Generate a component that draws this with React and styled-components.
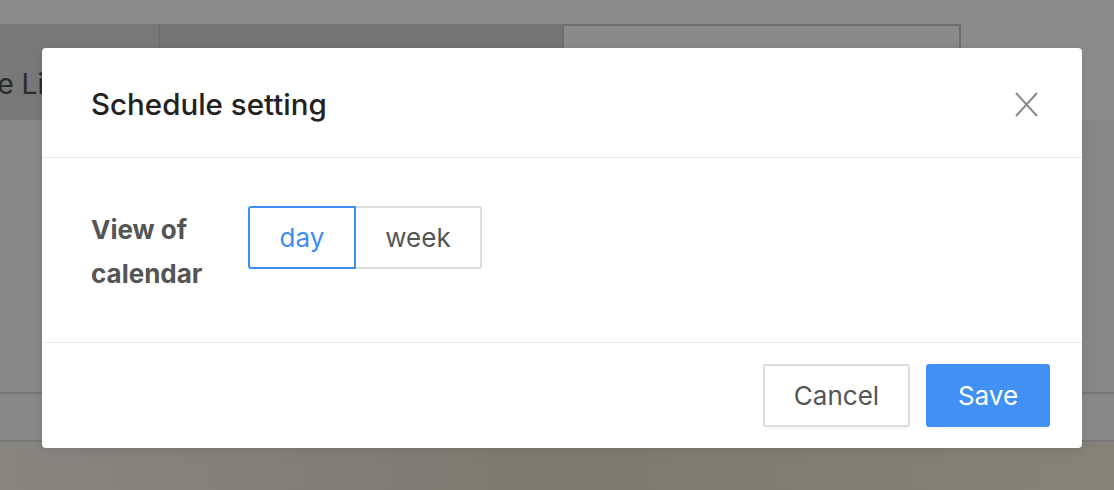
import styled, { createGlobalStyle } from "styled-components";

const GlobalStyle = createGlobalStyle`
  html, body {
    margin: 0;
    padding: 0;
    width: 1114px;
    height: 490px;
    overflow: hidden;
    font-family: Inter, "Liberation Sans", Arial, sans-serif;
  }
`;

const Page = styled.div`
  position: relative;
  width: 1114px;
  height: 490px;
  display: flex;
  flex-direction: column;
  background: #858178;
`;

const TopBand = styled.div`
  height: 24px;
  background: #8c8c8c;
`;

const TabRow = styled.div`
  height: 96px;
  display: flex;
  background: #8b8b8b;
`;

const Tab = styled.div`
  width: ${(p) => p.$width}px;
  background: ${(p) => p.$bg};
  border: ${(p) => (p.$outlined ? "2px solid #6f6f6f" : "none")};
  border-bottom: none;
  border-right: ${(p) => (p.$divider ? "2px solid #6e6e6e" : p.$outlined ? "2px solid #6f6f6f" : "none")};
  box-sizing: border-box;
  display: flex;
  align-items: center;
  font-size: 28px;
  color: #2b2b2b;
  overflow: hidden;
  white-space: nowrap;
  padding-top: 24px;
`;

const TabText = styled.span`
  margin-left: -52px;
`;

const Content = styled.div`
  height: 272px;
  background: #878787;
  border-bottom: 2px solid #777;
`;

const StripRow = styled.div`
  height: 46px;
  background: #888;
  border-bottom: 2px solid #777;
`;

const Floor = styled.div`
  flex: 1;
  background: linear-gradient(90deg, #878580, #7d7a71 50%, #858278);
`;

const Modal = styled.div`
  position: absolute;
  left: 42px;
  top: 48px;
  width: 1040px;
  height: 400px;
  background: #fff;
  border-radius: 4px;
  display: flex;
  flex-direction: column;
  box-shadow: 0 2px 12px rgba(0, 0, 0, 0.08);
`;

const Header = styled.div`
  height: 109px;
  border-bottom: 1px solid #ebebeb;
  display: flex;
  align-items: center;
  justify-content: space-between;
  padding: 0 44px 0 49px;
`;

const Title = styled.h2`
  margin: 0;
  font-size: 29.5px;
  font-weight: 500;
  color: #222;
  margin-top: 2px;
`;

const Close = styled.button`
  all: unset;
  width: 23px;
  height: 25px;
  display: flex;
  cursor: pointer;
  margin-top: 4px;
`;

const Body = styled.div`
  height: 185px;
  border-bottom: 1px solid #ebebeb;
  display: flex;
  align-items: flex-start;
  padding: 48px 0 0 49px;
  box-sizing: border-box;
`;

const Label = styled.div`
  width: 157px;
  font-size: 26px;
  font-weight: 700;
  line-height: 44px;
  color: #555;
  margin-top: 2px;
`;

const Segmented = styled.div`
  display: flex;
`;

const Segment = styled.button`
  all: unset;
  box-sizing: border-box;
  height: 63px;
  width: ${(p) => p.$width}px;
  text-align: center;
  font-size: 26px;
  line-height: 59px;
  color: ${(p) => (p.$active ? "#3d8ef0" : "#555")};
  border: 2px solid ${(p) => (p.$active ? "#3d8ef0" : "#dcdcdc")};
  border-left-width: ${(p) => (p.$active ? "2px" : "0")};
  border-radius: ${(p) => (p.$first ? "3px 0 0 3px" : "0 3px 3px 0")};
  cursor: pointer;
`;

const Footer = styled.div`
  flex: 1;
  display: flex;
  align-items: center;
  justify-content: flex-end;
  gap: 16px;
  padding: 0 32px 0 0;
`;

const Button = styled.button`
  all: unset;
  box-sizing: border-box;
  height: 63px;
  width: ${(p) => p.$width}px;
  text-align: center;
  font-size: 26px;
  line-height: 59px;
  border-radius: 3px;
  border: 2px solid ${(p) => (p.$primary ? "#4190f4" : "#dcdcdc")};
  background: ${(p) => (p.$primary ? "#4190f4" : "#fff")};
  color: ${(p) => (p.$primary ? "#fff" : "#555")};
  box-shadow: 0 2px 2px rgba(0, 0, 0, 0.04);
  cursor: pointer;
  margin-top: -1px;
`;

const App = () => {
  return (
    <>
      <GlobalStyle />
      <Page>
        <TopBand />
        <TabRow>
          <Tab $width={160} $bg="#777877" $divider>
            <TabText>Time Line</TabText>
          </Tab>
          <Tab $width={402} $bg="#737473" />
          <Tab $width={399} $bg="#8a8a8a" $outlined />
        </TabRow>
        <Content />
        <StripRow />
        <Floor />
        <Modal>
          <Header>
            <Title>Schedule setting</Title>
            <Close aria-label="close">
              <svg width="23" height="25" viewBox="0 0 23 25">
                <path
                  d="M1 1 L22 24 M22 1 L1 24"
                  stroke="#8a8a8a"
                  strokeWidth="2"
                  fill="none"
                />
              </svg>
            </Close>
          </Header>
          <Body>
            <Label>
              View of
              <br />
              calendar
            </Label>
            <Segmented>
              <Segment $width={108} $active $first>
                day
              </Segment>
              <Segment $width={126}>week</Segment>
            </Segmented>
          </Body>
          <Footer>
            <Button $width={147}>Cancel</Button>
            <Button $width={124} $primary>
              Save
            </Button>
          </Footer>
        </Modal>
      </Page>
    </>
  );
};

export default App;
